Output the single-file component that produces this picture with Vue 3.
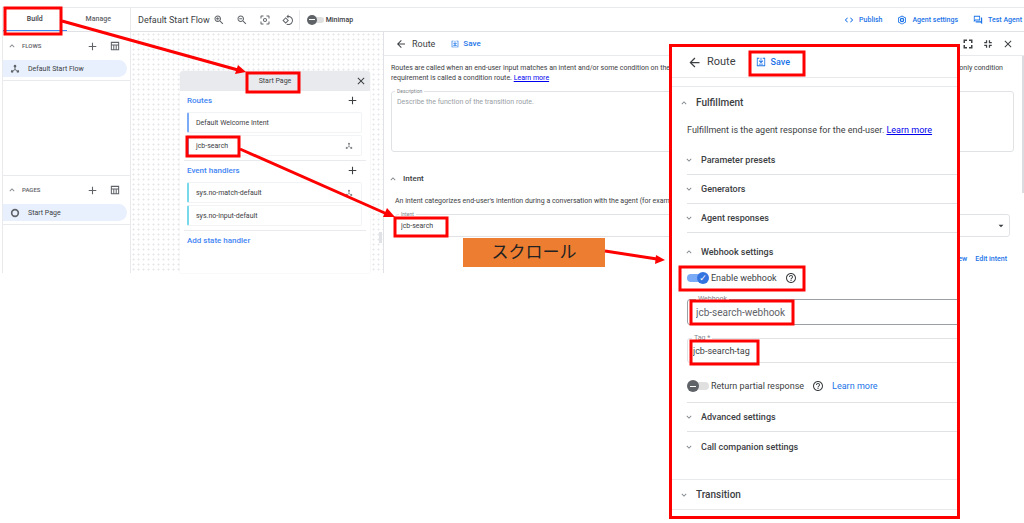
<template>
  <div class="page">
    <header class="topbar">
      <nav class="tabs">
        <button class="tab active">Build</button>
        <button class="tab">Manage</button>
      </nav>
      <span class="flow-title">Default Start Flow</span>
      <div class="tools">
        <button v-for="tool in tools" :key="tool.icon" :aria-label="tool.label">
          <Icon :name="tool.icon" />
        </button>
      </div>
      <label class="minimap">
        <input v-model="minimap" type="checkbox" class="switch small" />
        Minimap
      </label>
      <div class="actions">
        <button><Icon name="code" />Publish</button>
        <button><Icon name="settings" />Agent settings</button>
        <button><Icon name="chat" />Test Agent</button>
      </div>
    </header>

    <main class="workspace">
      <aside class="sidebar">
        <section v-for="group in groups" :key="group.title" class="group">
          <div class="group-head">
            <Icon name="less" class="chevron" />
            <h2>{{ group.title }}</h2>
            <button aria-label="Add"><Icon name="add" class="plus" /></button>
            <button aria-label="Table"><Icon name="table" /></button>
          </div>
          <a href="#" class="group-item"><Icon :name="group.icon" />{{ group.item }}</a>
        </section>
      </aside>

      <div class="canvas">
        <div class="node">
          <div class="node-head">
            <span>Start Page</span>
            <button aria-label="Close"><Icon name="close" /></button>
          </div>
          <section v-for="block in blocks" :key="block.title" class="block">
            <div class="block-head">
              <h3>{{ block.title }}</h3>
              <button aria-label="Add"><Icon name="add" /></button>
            </div>
            <button
              v-for="row in block.rows"
              :key="row.name"
              class="handler"
              :class="block.kind">
              {{ row.name }}
              <Icon v-if="row.linked" name="flow" />
            </button>
          </section>
          <button class="add-state">Add state handler</button>
        </div>
      </div>

      <section class="route">
        <div class="route-head">
          <button aria-label="Back"><Icon name="back" /></button>
          <h2>Route</h2>
          <button class="save"><Icon name="save" />Save</button>
          <div class="window-tools">
            <button aria-label="Expand"><Icon name="expand" /></button>
            <button aria-label="Shrink"><Icon name="shrink" /></button>
            <button aria-label="Close"><Icon name="close" class="big" /></button>
          </div>
        </div>
        <div class="route-body">
          <div class="intro">
            <div class="intro-line">
              <span>Routes are called when an end-user input matches an intent and/or some condition on the</span>
              <span>only condition</span>
            </div>
            <div>requirement is called a condition route. <a href="#">Learn more</a></div>
          </div>
          <div class="field description">
            <label for="description">Description</label>
            <textarea
              id="description"
              v-model="description"
              placeholder="Describe the function of the transition route."></textarea>
          </div>
          <h3 class="intent-title"><Icon name="less" class="chevron" />Intent</h3>
          <p class="intent-text">
            An intent categorizes end-user's intention during a conversation with the agent (for example)
          </p>
          <div class="field intent">
            <label for="intent">Intent</label>
            <select id="intent" v-model="intent">
              <option>jcb-search</option>
            </select>
            <Icon name="drop" />
          </div>
          <div class="intent-links">
            <a href="#">View</a>
            <a href="#">Edit intent</a>
          </div>
        </div>
      </section>
    </main>

    <section class="popup">
      <div class="popup-head">
        <button aria-label="Back"><Icon name="back" /></button>
        <h2>Route</h2>
        <button class="save"><Icon name="save" />Save</button>
      </div>
      <div class="popup-title"><Icon name="less" class="chevron" /><h3>Fulfillment</h3></div>
      <p class="popup-text">
        Fulfillment is the agent response for the end-user. <a href="#">Learn more</a>
      </p>
      <div class="accordion">
        <button v-for="name in responses" :key="name"><Icon name="more" class="chevron" />{{ name }}</button>
      </div>
      <div class="webhook">
        <h4><Icon name="less" class="chevron" />Webhook settings</h4>
        <div class="switch-row enable">
          <label><input v-model="webhookEnabled" type="checkbox" class="switch" />Enable webhook</label>
          <Icon name="help" />
        </div>
        <div class="field large strong">
          <label for="webhook">Webhook</label>
          <input id="webhook" v-model="webhook" type="text" />
        </div>
        <div class="field large tag">
          <label for="tag">Tag *</label>
          <input id="tag" v-model="tag" type="text" />
        </div>
        <div class="switch-row">
          <label><input v-model="partial" type="checkbox" class="switch" />Return partial response</label>
          <Icon name="help" />
          <a href="#">Learn more</a>
        </div>
      </div>
      <div class="accordion last">
        <button v-for="name in settings" :key="name"><Icon name="more" class="chevron" />{{ name }}</button>
      </div>
      <div class="popup-title transition"><Icon name="more" class="chevron" /><h3>Transition</h3></div>
    </section>

    <div class="scroll-note">スクロール</div>

    <svg class="marks" width="1024" height="523" viewBox="0 0 1024 523">
      <rect
        v-for="(box, i) in boxes"
        :key="i"
        :x="box[0]"
        :y="box[1]"
        :width="box[2]"
        :height="box[3]" />
      <g v-for="(arrow, i) in arrows" :key="i">
        <path :d="arrow.line" />
        <path class="tip" :d="arrow.tip" />
      </g>
    </svg>
  </div>
</template>

<script setup>
import { ref, h } from 'vue';

const icons = {
  add: 'M19 13h-6v6h-2v-6H5v-2h6V5h2v6h6v2z',
  close:
    'M19 6.41L17.59 5 12 10.59 6.41 5 5 6.41 10.59 12 5 17.59 6.41 19 12 13.41 17.59 19 19 17.59 13.41 12z',
  back: 'M20 11H7.83l5.59-5.59L12 4l-8 8 8 8 1.41-1.41L7.83 13H20v-2z',
  zoomIn:
    'M15.5 14h-.79l-.28-.27C15.41 12.59 16 11.11 16 9.5 16 5.91 13.09 3 9.5 3S3 5.91 3 9.5 5.91 16 9.5 16c1.61 0 3.09-.59 4.23-1.57l.27.28v.79l5 4.99L20.49 19l-4.99-5zm-6 0C7.01 14 5 11.99 5 9.5S7.01 5 9.5 5 14 7.01 14 9.5 11.99 14 9.5 14zM13 10.3h-2.7V13H8.7v-2.7H6V8.7h2.7V6h1.6v2.7H13z',
  zoomOut:
    'M15.5 14h-.79l-.28-.27C15.41 12.59 16 11.11 16 9.5 16 5.91 13.09 3 9.5 3S3 5.91 3 9.5 5.91 16 9.5 16c1.61 0 3.09-.59 4.23-1.57l.27.28v.79l5 4.99L20.49 19l-4.99-5zm-6 0C7.01 14 5 11.99 5 9.5S7.01 5 9.5 5 14 7.01 14 9.5 11.99 14 9.5 14zM6.5 8.7h6v1.6h-6z',
  focus:
    'M5 15H3v4c0 1.1.9 2 2 2h4v-2H5v-4zM5 5h4V3H5c-1.1 0-2 .9-2 2v4h2V5zm14-2h-4v2h4v4h2V5c0-1.1-.9-2-2-2zm0 16h-4v2h4c1.1 0 2-.9 2-2v-4h-2v4zM12 8c-2.21 0-4 1.79-4 4s1.79 4 4 4 4-1.79 4-4-1.79-4-4-4zm0 6c-1.1 0-2-.9-2-2s.9-2 2-2 2 .9 2 2-.9 2-2 2z',
  rotate:
    'M7.34 6.41L.86 12.9l6.49 6.48 6.49-6.48-6.5-6.49zM3.69 12.9l3.66-3.66L11 12.9l-3.66 3.66-3.65-3.66zm15.67-6.26C17.61 4.88 15.3 4 13 4V.76L8.76 5 13 9.24V6c1.79 0 3.58.68 4.95 2.05 2.73 2.73 2.73 7.17 0 9.9C16.58 19.32 14.79 20 13 20c-.97 0-1.94-.21-2.84-.61l-1.49 1.49C10.02 21.62 11.51 22 13 22c2.3 0 4.61-.88 6.36-2.64 3.52-3.51 3.52-9.21 0-12.72z',
  code: 'M9.4 16.6L4.8 12l4.6-4.6L8 6l-6 6 6 6 1.4-1.4zm5.2 0l4.6-4.6-4.6-4.6L16 6l6 6-6 6-1.4-1.4z',
  settings:
    'M12 1l9.6 5.5v11L12 23l-9.6-5.5v-11zM12 3.3L4.4 7.7v8.6l7.6 4.4 7.6-4.4V7.7zM12 6.5a5.5 5.5 0 1 1 0 11a5.5 5.5 0 0 1 0-11zm0 3.2a2.3 2.3 0 1 0 0 4.6a2.3 2.3 0 0 0 0-4.6z',
  chat: 'M15 4v7H5.17L4 12.17V4h11m1-2H3c-.55 0-1 .45-1 1v14l4-4h10c.55 0 1-.45 1-1V3c0-.55-.45-1-1-1zm5 4h-2v9H6v2c0 .55.45 1 1 1h11l4 4V7c0-.55-.45-1-1-1z',
  less: 'M12 8l-6 6 1.41 1.41L12 10.83l4.59 4.58L18 14z',
  more: 'M16.59 8.59L12 13.17 7.41 8.59 6 10l6 6 6-6z',
  expand: 'M6 14H3v7h7v-3H6v-4zm-3-4h3V6h4V3H3v7zm15 8h-4v3h7v-7h-3v4zM14 3v3h4v4h3V3h-7z',
  shrink: 'M3 17h4v4h3v-7H3v3zm4-10H3v3h7V3H7v4zm7 14h3v-4h4v-3h-7v7zm3-14V3h-3v7h7V7h-4z',
  help: 'M11 18h2v-2h-2v2zm1-16C6.48 2 2 6.48 2 12s4.48 10 10 10 10-4.48 10-10S17.52 2 12 2zm0 18c-4.41 0-8-3.59-8-8s3.59-8 8-8 8 3.59 8 8-3.59 8-8 8zm0-14c-2.21 0-4 1.79-4 4h2c0-1.1.9-2 2-2s2 .9 2 2c0 2-3 1.75-3 5h2c0-2.25 3-2.5 3-5 0-2.21-1.79-4-4-4z',
  table: 'M2 2h20v20H2zM4.5 4.5v4h15v-4zM4.5 11v8.5h3.4V11zM10.3 11v8.5h3.4V11zM16.1 11v8.5h3.4V11z',
  flow: 'M12 2a3.2 3.2 0 0 1 1.1 6.2v4.2l4.1 3a3 3 0 1 1-1.2 1.6L12 14.2l-4 2.8a3 3 0 1 1-1.2-1.6l4.1-3V8.2A3.2 3.2 0 0 1 12 2z',
  ring: 'M12 2a10 10 0 1 1 0 20a10 10 0 0 1 0-20zm0 4a6 6 0 1 0 0 12a6 6 0 0 0 0-12z',
  save: 'M8 2v2H4v16h16V4h-4V2h6v20H2V2zM11 2h2v9l3-3 1.4 1.4L12 15 6.6 9.4 8 8l3 3zM7 16h10v2H7z',
  drop: 'M6 9l6 6 6-6z',
};

const Icon = (props) =>
  h('svg', { class: 'icon', viewBox: '0 0 24 24', 'aria-hidden': 'true' }, [
    h('path', { d: icons[props.name], 'fill-rule': 'evenodd' }),
  ]);
Icon.props = ['name'];

const minimap = ref(false);
const description = ref('');
const intent = ref('jcb-search');
const webhookEnabled = ref(true);
const webhook = ref('jcb-search-webhook');
const tag = ref('jcb-search-tag');
const partial = ref(false);

const tools = [
  { icon: 'zoomIn', label: 'Zoom in' },
  { icon: 'zoomOut', label: 'Zoom out' },
  { icon: 'focus', label: 'Center' },
  { icon: 'rotate', label: 'Rotate' },
];

const groups = [
  { title: 'FLOWS', item: 'Default Start Flow', icon: 'flow' },
  { title: 'PAGES', item: 'Start Page', icon: 'ring' },
];

const blocks = [
  {
    title: 'Routes',
    kind: 'route-kind',
    rows: [{ name: 'Default Welcome Intent' }, { name: 'jcb-search', linked: true }],
  },
  {
    title: 'Event handlers',
    kind: 'event-kind',
    rows: [{ name: 'sys.no-match-default', linked: true }, { name: 'sys.no-input-default' }],
  },
];

const responses = ['Parameter presets', 'Generators', 'Agent responses'];
const settings = ['Advanced settings', 'Call companion settings'];

// x, y, width, height
const boxes = [
  [5, 8, 56, 26],
  [247, 73, 52, 19],
  [187, 137, 52, 19],
  [395, 218, 52, 18],
  [750, 52, 54, 23],
  [680, 267, 124, 23],
  [691, 301, 102, 23],
  [691, 341, 67, 23],
];

const arrows = [
  { line: 'M62 21L238 70', tip: 'M246 72L235 74L238 65z' },
  { line: 'M240 149L387 214', tip: 'M395 217L383 217L387 208z' },
  { line: 'M605 251L657 259', tip: 'M665 260L655 264L656 255z' },
];
</script>

<style>
body {
  margin: 0;
  background: #fff;
}
</style>

<style scoped>
* {
  box-sizing: border-box;
}
h2,
h3,
h4,
p {
  margin: 0;
  font-weight: 500;
}
button,
input,
select,
textarea {
  padding: 0;
  border: none;
  background: none;
  color: inherit;
  font: inherit;
}
button {
  display: flex;
  align-items: center;
  cursor: pointer;
}
.icon {
  width: 10px;
  height: 10px;
  flex: none;
  fill: currentColor;
}
.chevron {
  width: 10px;
  height: 10px;
  color: #80868b;
}
.page {
  position: relative;
  min-height: 523px;
  padding: 7px 0 0 2px;
  overflow: hidden;
  color: #3c4043;
  font-family: Roboto, 'Noto Sans CJK JP', sans-serif;
  font-size: 7px;
  line-height: 10px;
}
.topbar {
  display: flex;
  align-items: center;
  height: 25px;
  border-top: 1px solid #e8eaed;
  border-bottom: 1px solid #e0e2e5;
}
.tabs {
  display: flex;
  align-self: stretch;
  width: 129px;
  border: solid #e8eaed;
  border-width: 0 1px;
}
.tab {
  flex: 1;
  justify-content: center;
  border-bottom: 1px solid transparent;
  font-weight: 500;
  color: #5f6368;
}
.tab.active {
  border-color: #4285f4;
  color: #3c4043;
}
.flow-title {
  margin-left: 7px;
  font-size: 9px;
}
.tools {
  display: flex;
  align-items: center;
  gap: 11px;
  height: 20px;
  margin-left: 3px;
  padding-right: 5px;
  border-right: 1px solid #e8eaed;
  color: #5f6368;
}
.tools .icon,
.node-head .icon,
.route-head .icon.big {
  width: 12px;
  height: 12px;
}
.minimap {
  display: flex;
  align-items: center;
  gap: 2px;
  margin-left: 7px;
  font-weight: 500;
}
.actions {
  display: flex;
  gap: 15px;
  margin-left: auto;
  padding-right: 2px;
  color: #1a73e8;
  font-weight: 500;
}
.actions button {
  gap: 5px;
}
.switch {
  position: relative;
  flex: none;
  width: 22px;
  height: 12px;
  margin: 0;
  appearance: none;
  cursor: pointer;
}
.switch::before {
  content: '';
  position: absolute;
  inset: 2px 0 2px 4px;
  border-radius: 4px;
  background: #e0e0e0;
}
.switch::after {
  content: '';
  position: absolute;
  left: 0;
  top: 0;
  width: 12px;
  height: 12px;
  border-radius: 50%;
  background: linear-gradient(#fff, #fff) center / 6px 1px no-repeat #5f6368;
}
.switch.small {
  width: 17px;
  height: 10px;
}
.switch.small::after {
  width: 10px;
  height: 10px;
}
.switch:checked::before {
  inset: 2px 4px 2px 0;
  background: #7baaf7;
}
.switch:checked::after {
  left: 10px;
  content: '✓';
  background: #3474e0;
  color: #fff;
  font: bold 9px/12px 'DejaVu Sans', sans-serif;
  text-align: center;
}
.workspace {
  display: flex;
  height: 241px;
}
.sidebar {
  width: 129px;
  border: solid #e8eaed;
  border-width: 0 1px;
}
.group {
  height: 144px;
  border-bottom: 1px solid #e8eaed;
}
.group:last-child {
  border-bottom: none;
}
.group-head {
  display: flex;
  align-items: center;
  height: 28px;
  padding: 0 10px 0 4px;
  color: #5f6368;
}
.group-head h2 {
  flex: 1;
  margin-left: 5px;
  font-size: 6px;
}
.group-head button {
  margin-left: 11px;
}
.group-head .plus,
.block-head .icon {
  width: 13px;
  height: 13px;
}
.group-item {
  display: flex;
  align-items: center;
  gap: 8px;
  height: 17px;
  margin-right: 3px;
  padding-left: 7px;
  border-radius: 0 9px 9px 0;
  background: #e8f0fe;
  color: #3c4043;
  text-decoration: none;
}
.group-item .icon {
  color: #5f6368;
}
.group::after {
  content: '';
  display: block;
  height: 3px;
  border-bottom: 1px solid #e8eaed;
}
.canvas {
  position: relative;
  flex: none;
  width: 253px;
  padding: 39px 13px 0 49px;
  border-right: 1px solid #e0e2e5;
  background: radial-gradient(circle, #e4e6e9 25%, transparent 32%) 0 0 / 5px 5px;
}
/* pane resize handle */
.canvas::after {
  content: '';
  position: absolute;
  right: 1px;
  bottom: 30px;
  width: 3px;
  height: 11px;
  background: #e0e2e5;
}
.node {
  height: 202px;
  border-radius: 4px 4px 0 0;
  background: #fff;
  box-shadow: 0 0 1px #bdc1c6;
}
.node-head {
  display: flex;
  align-items: center;
  height: 20px;
  padding: 0 3px 0 15px;
  border-radius: 4px 4px 0 0;
  background: #e8eaed;
}
.node-head span {
  flex: 1;
  text-align: center;
}
.block {
  display: flex;
  flex-direction: column;
  gap: 2px;
  margin: 0 4px;
  padding: 0 4px 4px 3px;
  border-bottom: 1px solid #e8eaed;
}
.block-head {
  display: flex;
  justify-content: space-between;
  align-items: center;
  height: 19px;
  padding-right: 3px;
}
.block-head h3,
.add-state {
  color: #4285f4;
  font-size: 8px;
  font-weight: 500;
}
.handler {
  justify-content: space-between;
  height: 21px;
  padding: 0 8px 0 7px;
  border: 1px solid #f1f3f4;
  border-left: 2px solid #7baaf7;
  border-radius: 2px;
}
.handler.event-kind {
  border-left-color: #78d9ec;
}
.handler .icon {
  width: 8px;
  height: 8px;
  color: #80868b;
}
.add-state {
  height: 20px;
  margin-left: 7px;
}
.route {
  flex: 1;
  min-width: 0;
}
.route-head {
  display: flex;
  align-items: center;
  height: 24px;
  padding: 0 10px 0 11px;
  border-bottom: 1px solid #e8eaed;
}
.route-head button:first-child .icon {
  width: 12px;
  height: 12px;
}
.route-head h2 {
  margin: 0 16px 0 5px;
  font-size: 9px;
  font-weight: 400;
}
.save {
  gap: 4px;
  color: #1a73e8;
  font-size: 8px;
  font-weight: 500;
}
.route .save .icon {
  width: 8px;
  height: 8px;
}
.window-tools {
  display: flex;
  align-items: center;
  gap: 9px;
  margin-left: auto;
}
.route-body {
  height: 217px;
  padding: 7px 10px 0 7px;
  background: linear-gradient(#dadce0, #dadce0) right top / 2px 137px no-repeat;
}
.intro-line {
  display: flex;
  justify-content: space-between;
  padding-right: 11px;
}
.intro a,
.popup-text a {
  color: #0000ee;
}
.field {
  position: relative;
  border: 1px solid #e0e2e5;
  border-radius: 3px;
}
.field label {
  position: absolute;
  left: 3px;
  top: -4px;
  padding: 0 2px;
  background: #fff;
  color: #80868b;
  font-size: 5px;
  line-height: 6px;
}
.field input,
.field select,
.field textarea {
  display: block;
  width: 100%;
  height: 100%;
  padding: 0 5px;
  outline: none;
  resize: none;
  appearance: none;
}
.field.description {
  height: 61px;
  margin-top: 8px;
}
.field.description textarea {
  padding-top: 5px;
}
.field textarea::placeholder {
  color: #9aa0a6;
}
.intent-title {
  display: flex;
  align-items: center;
  gap: 5px;
  height: 20px;
  margin-top: 17px;
  font-size: 8px;
}
.intent-title .chevron {
  margin-left: -3px;
}
.intent-text {
  margin: 7px 0 0 4px;
  font-weight: 400;
  white-space: nowrap;
}
.field.intent {
  height: 23px;
  margin: 8px 4px 0;
}
.field.intent .icon {
  position: absolute;
  right: 3px;
  top: 6px;
  pointer-events: none;
}
.intent-links {
  display: flex;
  justify-content: flex-end;
  gap: 8px;
  margin: 17px 7px 0 0;
  font-weight: 500;
}
.intent-links a,
.switch-row a {
  color: #1a73e8;
  text-decoration: none;
}
.popup {
  position: absolute;
  left: 669px;
  top: 44px;
  width: 291px;
  height: 475px;
  overflow: hidden;
  border: 3px solid #f00;
  background: #fff;
  font-size: 9px;
}
.popup-head {
  display: flex;
  align-items: center;
  height: 31px;
  padding-left: 15px;
  border-bottom: 1px solid #e8eaed;
}
.popup-head .icon {
  width: 15px;
  height: 15px;
}
.popup-head h2 {
  margin: 0 20px 0 5px;
  font-size: 11px;
  font-weight: 400;
}
.popup-head .save {
  gap: 5px;
  font-size: 9px;
}
.popup-head .save .icon {
  width: 10px;
  height: 10px;
}
.popup-title {
  display: flex;
  align-items: center;
  gap: 7px;
  height: 33px;
  margin-top: 8px;
  padding-left: 7px;
  border-top: 1px solid #e8eaed;
}
.popup-title h3 {
  font-size: 10px;
}
.popup-text {
  margin: 6px 0 11px 15px;
  font-weight: 400;
}
.accordion {
  margin-left: 15px;
}
.accordion button {
  width: 100%;
  height: 29px;
  gap: 7px;
  border-bottom: 1px solid #e0e2e5;
  font-weight: 500;
}
.accordion .chevron,
.webhook h4 .chevron {
  margin-left: -3px;
}
.webhook {
  margin-left: 15px;
  border-bottom: 1px solid #e0e2e5;
}
.webhook h4 {
  display: flex;
  align-items: center;
  gap: 7px;
  height: 37px;
}
.switch-row {
  display: flex;
  align-items: center;
  gap: 8px;
  height: 16px;
}
.switch-row .icon {
  width: 12px;
  height: 12px;
}
.switch-row label {
  display: flex;
  align-items: center;
  gap: 2px;
}
.switch-row.enable {
  margin-bottom: 13px;
}
.field.large {
  height: 26px;
  margin-right: -6px;
}
.field.large label {
  left: 8px;
  top: -5px;
  font-size: 7px;
  line-height: 8px;
}
.field.large input {
  padding-left: 8px;
}
.field.strong {
  border-color: #9aa0a6;
}
.field.strong input {
  color: #5f6368;
  font-size: 10px;
}
.field.tag {
  height: 25px;
  margin-top: 13px;
  margin-bottom: 15px;
}
.field.tag label {
  left: 4px;
}
.field.tag input {
  padding-left: 5px;
}
.webhook .switch-row:last-child {
  margin-bottom: 8px;
}
.accordion.last button:last-child {
  border-bottom: none;
}
.popup-title.transition {
  height: 31px;
  margin-top: 18px;
  border-bottom: 1px solid #e8eaed;
}
.scroll-note {
  position: absolute;
  left: 463px;
  top: 238px;
  width: 142px;
  height: 29px;
  background: #ed7d31;
  color: #222;
  font-size: 17px;
  line-height: 28px;
  text-align: center;
}
.marks {
  position: absolute;
  left: 0;
  top: 0;
  fill: none;
  stroke: #f00;
  stroke-width: 3px;
  pointer-events: none;
}
.marks .tip {
  fill: #f00;
  stroke: none;
}
</style>
